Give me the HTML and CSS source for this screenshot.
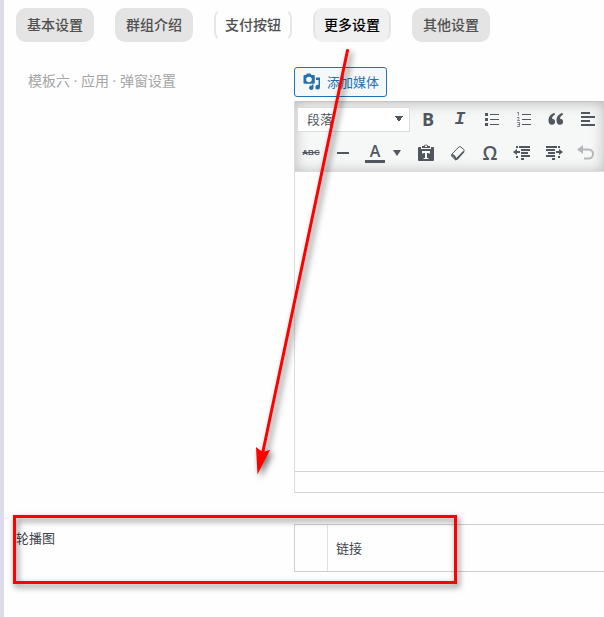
FILE: index.html
```html
<!DOCTYPE html>
<html lang="zh-CN">
<head>
<meta charset="utf-8">
<meta name="viewport" content="width=device-width, initial-scale=1">
<title>更多设置</title>
<link rel="stylesheet" href="styles.css">
</head>
<body>
<main class="page">
  <nav class="tabs">
    <button class="tab" type="button">基本设置</button>
    <button class="tab" type="button">群组介绍</button>
    <button class="tab tab-light" type="button">支付按钮</button>
    <button class="tab tab-active" type="button">更多设置</button>
    <button class="tab" type="button">其他设置</button>
  </nav>

  <section class="row">
    <h2 class="row-title">模板六 · 应用 · 弹窗设置</h2>
    <div class="field">
      <button class="media-button" type="button">
        <svg width="18" height="18" viewBox="0 0 18 18" fill="currentColor"><path fill-rule="evenodd" d="M1.500 2H3l1-1.500h3.500L8.500 2H11q.8 0 .8.800V10q0 .8-.8.800H1.300Q.5 10.800.5 10V3q0-1 1-1zM6 3.700a2.800 2.800 0 1 0 0 5.600 2.800 2.800 0 0 0 0-5.600z"/><path d="M13 4.500h4v9.700a2.300 2.300 0 1 1-1.500-2.100V7H13z"/><path d="M9 11.500h1.500v3.200A2.200 2.200 0 1 1 9 12.600z"/></svg>
        <span>添加媒体</span>
      </button>
      <div class="editor">
        <div class="toolbar">
          <div class="tools">
            <select class="format" aria-label="段落格式"><option>段落</option></select>
            <button class="tool bold" type="button">B</button>
            <button class="tool italic" type="button">I</button>
            <button class="tool" type="button" aria-label="项目符号列表"><svg width="16" height="16" viewBox="0 0 16 16"><path d="M6 3.500h9M6 8.500h9M6 13.500h9" stroke="currentColor"/><path d="M1 2h3v3H1zM1 7h3v3H1zM1 12h3v3H1z" fill="currentColor"/></svg></button>
            <button class="tool" type="button" aria-label="编号列表"><svg width="16" height="16" viewBox="0 0 16 16" fill="none" stroke="currentColor"><path d="M6 3.500h9M6 8.500h9M6 13.500h9"/><path d="M1 1.500h1.500v3M1 6.500h2v1L1.500 9.500H4M1 11.500h2.500v4H1M1.500 13.500h2" stroke-width=".7"/></svg></button>
            <button class="tool" type="button" aria-label="引用"><svg width="18" height="16" viewBox="0 0 18 16" fill="currentColor"><path id="quote" d="M7.500 2C4 2.700 1.500 5.500 1.500 9.500c0 2.700 1.300 4.300 3.400 4.300 1.900 0 3.200-1.300 3.200-3.100S6.800 7.700 5 7.700c.1-1.900 1.200-3.200 3-4z"/><use href="#quote" x="8"/></svg></button>
            <button class="tool" type="button" aria-label="左对齐"><svg width="16" height="16" viewBox="0 0 16 16"><path d="M1 2h9M1 6h14M1 10h9M1 14h14" stroke="currentColor" stroke-width="2"/></svg></button>
          </div>
          <div class="tools">
            <button class="tool strike" type="button">ABC</button>
            <button class="tool" type="button" aria-label="水平线"><svg width="16" height="16" viewBox="0 0 16 16"><path d="M2 8h12" stroke="currentColor" stroke-width="2"/></svg></button>
            <button class="tool" type="button"><span class="color-letter">A</span></button>
            <button class="tool caret" type="button" aria-label="更多颜色"><svg width="10" height="8" viewBox="0 0 10 8"><path d="M1 1h8L5 7z" fill="currentColor"/></svg></button>
            <button class="tool" type="button" aria-label="粘贴为文本"><svg width="18" height="18" viewBox="0 0 18 18" fill="currentColor"><path fill-rule="evenodd" d="M2 3h2v2h10V3h2q1 0 1 1v12q0 1-1 1H2q-1 0-1-1V4q0-1 1-1zM5 7v2.500h1.500V9H8v5H6.500v1h5v-1H10V9h1.500v.5H13V7z"/><path fill-rule="evenodd" d="M5 4V2h2Q7 .5 9 .5T11 2h2v2zM8 1.500V3h2V1.500z"/></svg></button>
            <button class="tool" type="button" aria-label="清除格式"><svg width="16" height="16" viewBox="0 0 16 16" fill="none" stroke="currentColor"><path d="M2 9l6.800-7q1-.8 2 0l3 2.500q.8.900 0 2L7.500 14q-1.300 1-2.600.2L2.300 12Q1 10.500 2 9z"/><path d="M1.800 10q2.800.3 4 4.300l1.200-.6 6.800-7.200" stroke-width="1.800"/></svg></button>
            <button class="tool omega" type="button">Ω</button>
            <button class="tool" type="button" aria-label="减少缩进"><svg width="18" height="16" viewBox="0 0 18 16"><path d="M3 2h2m1 0h11M8 5h9M8 8h7M8 11h9M3 12h2M8 14h3" stroke="currentColor" stroke-width="2"/><path d="M0 7l4-3v2h3v2H4v2z" fill="currentColor"/></svg></button>
            <button class="tool" type="button" aria-label="增加缩进"><svg width="18" height="16" viewBox="0 0 18 16"><path d="M1 2h11m1 0h2M1 5h9M3 8h7M1 11h9M13 12h2M7 14h3" stroke="currentColor" stroke-width="2"/><path d="M18 7l-4-3v2h-3v2h3v2z" fill="currentColor"/></svg></button>
            <button class="tool" type="button" aria-label="撤销" disabled><svg width="18" height="16" viewBox="0 0 18 16"><path d="M5 4.500h6.500a4.500 4.500 0 0 1 0 9H7" fill="none" stroke="currentColor" stroke-width="2"/><path d="M0 4.500L6 0v9z" fill="currentColor"/></svg></button>
          </div>
        </div>
        <div class="canvas" contenteditable="true" role="textbox" aria-label="正文"></div>
        <div class="status"></div>
      </div>
    </div>
  </section>

  <section class="row row-carousel">
    <h2 class="carousel-title">轮播图</h2>
    <table class="links">
      <tr><td class="handle"></td><th scope="col">链接</th></tr>
    </table>
  </section>

  <div class="mark-box"></div>
  <svg class="mark-arrow" width="120" height="450" viewBox="0 0 120 450"><path d="M111.500 10.500L26 416" fill="none" stroke="#f00" stroke-width="3" stroke-linecap="round"/><path d="M21.500 434.500L20 407l6.500 5 7.500-2z" fill="#f00"/></svg>
</main>
</body>
</html>
```
FILE: styles.css
```css
* {
  box-sizing: border-box;
}

body {
  margin: 0;
  background: #fefefe;
  color: #3c434a;
  font: 13px/20px "Open Sans", "Noto Sans CJK SC", sans-serif;
}

button,
select {
  margin: 0;
  font: inherit;
}

h2 {
  margin: 0;
  font-weight: 400;
}

.page {
  position: relative;
  min-height: 100vh;
  padding: 8px 0 0 12px;
  border-left: 4px solid #dcdcec;
  overflow: hidden;
}

.tabs {
  display: flex;
  gap: 21px;
}

.tab {
  flex: none;
  height: 34px;
  padding: 0 9px;
  border: 2px solid #e2e3e4;
  border-radius: 10px;
  background: #e4e4e4;
  color: #505050;
  font-size: 14px;
  font-weight: 500;
}

.tab-light {
  border-color: transparent #e6e6e6;
  background: #fefefe;
}

.tab-active {
  border-color: #f0f0f0 #e4e4e4;
  background: #f0f0f0;
  color: #000;
}

.row {
  display: grid;
  grid-template-columns: 278px minmax(0, 1fr);
  padding-top: 25px;
}

.row-title {
  padding: 4px 12px;
  color: #a5a5a5;
  font-size: 14px;
}

.media-button {
  display: flex;
  align-items: center;
  gap: 6px;
  height: 30px;
  margin-bottom: 4px;
  padding: 0 7px 0 8px;
  border: 1px solid #2271b1;
  border-radius: 3px;
  background: #f6f7f7;
  color: #2271b1;
}

.editor {
  border-left: 1px solid #dcdcde;
}

.toolbar {
  display: grid;
  gap: 4px;
  padding: 2px 0 3px;
  border-top: 1px solid #c3c4c7;
  border-bottom: 1px solid #dcdcde;
  background: #f6f7f7;
  box-shadow: inset 0 1px 14px #b8b8b8;
}

.tools {
  display: flex;
  align-items: center;
  height: 30px;
}

.format {
  flex: none;
  width: 113px;
  height: 25px;
  margin: 0 2px;
  padding: 0 9px;
  border: 1px solid #dcdcde;
  border-radius: 0;
  appearance: none;
  background-color: #fff;
  background-image:
    linear-gradient(to bottom right, #50575e 50%, transparent 50%),
    linear-gradient(to bottom left, #50575e 50%, transparent 50%);
  background-position: right 6px center, right 10px center;
  background-repeat: no-repeat;
  background-size: 4px 6px;
  color: #50575e;
}

.tool {
  display: flex;
  flex: none;
  align-items: center;
  justify-content: center;
  width: 32px;
  height: 28px;
  padding: 0;
  border: 0;
  background: none;
  color: #50575e;
}

.tool:disabled {
  color: #b5b8bb;
}

.bold {
  font: 700 18px/20px "Open Sans", sans-serif;
}

.italic {
  font: italic 700 18px/20px "Liberation Mono", monospace;
}

.strike {
  font: 700 8px/10px "Liberation Sans", sans-serif;
  text-decoration: line-through;
}

.color-letter {
  width: 20px;
  border-bottom: 3px solid #50575e;
  font: 600 16px/17px "Open Sans", sans-serif;
}

.caret {
  width: 12px;
  margin-right: 7px;
}

.omega {
  font: 600 19px/20px "Open Sans", sans-serif;
}

.canvas {
  height: 299px;
  outline: 0;
}

.status {
  height: 22px;
  border: solid #d2d3d6;
  border-width: 1px 0;
}

.row-carousel {
  padding-top: 31px;
}

.carousel-title {
  padding-top: 4px;
  font-size: 13px;
}

.links {
  width: 100%;
  height: 48px;
  border: solid #ccd0d4;
  border-width: 1px 0 1px 1px;
  border-spacing: 0;
}

.links td,
.links th {
  padding: 0 8px;
  font-weight: 400;
  text-align: left;
}

.links .handle {
  width: 33px;
  border-right: 1px solid #e1e1e1;
}

.mark-box {
  position: absolute;
  top: 515px;
  left: 9px;
  width: 444px;
  height: 69px;
  border: 3px solid #f00;
  filter: drop-shadow(2px 3px 3px rgb(0 0 0 / 55%));
  pointer-events: none;
}

.mark-arrow {
  position: absolute;
  top: 40px;
  left: 232px;
  filter: drop-shadow(3px 3px 3px rgb(0 0 0 / 55%));
  pointer-events: none;
}
```
